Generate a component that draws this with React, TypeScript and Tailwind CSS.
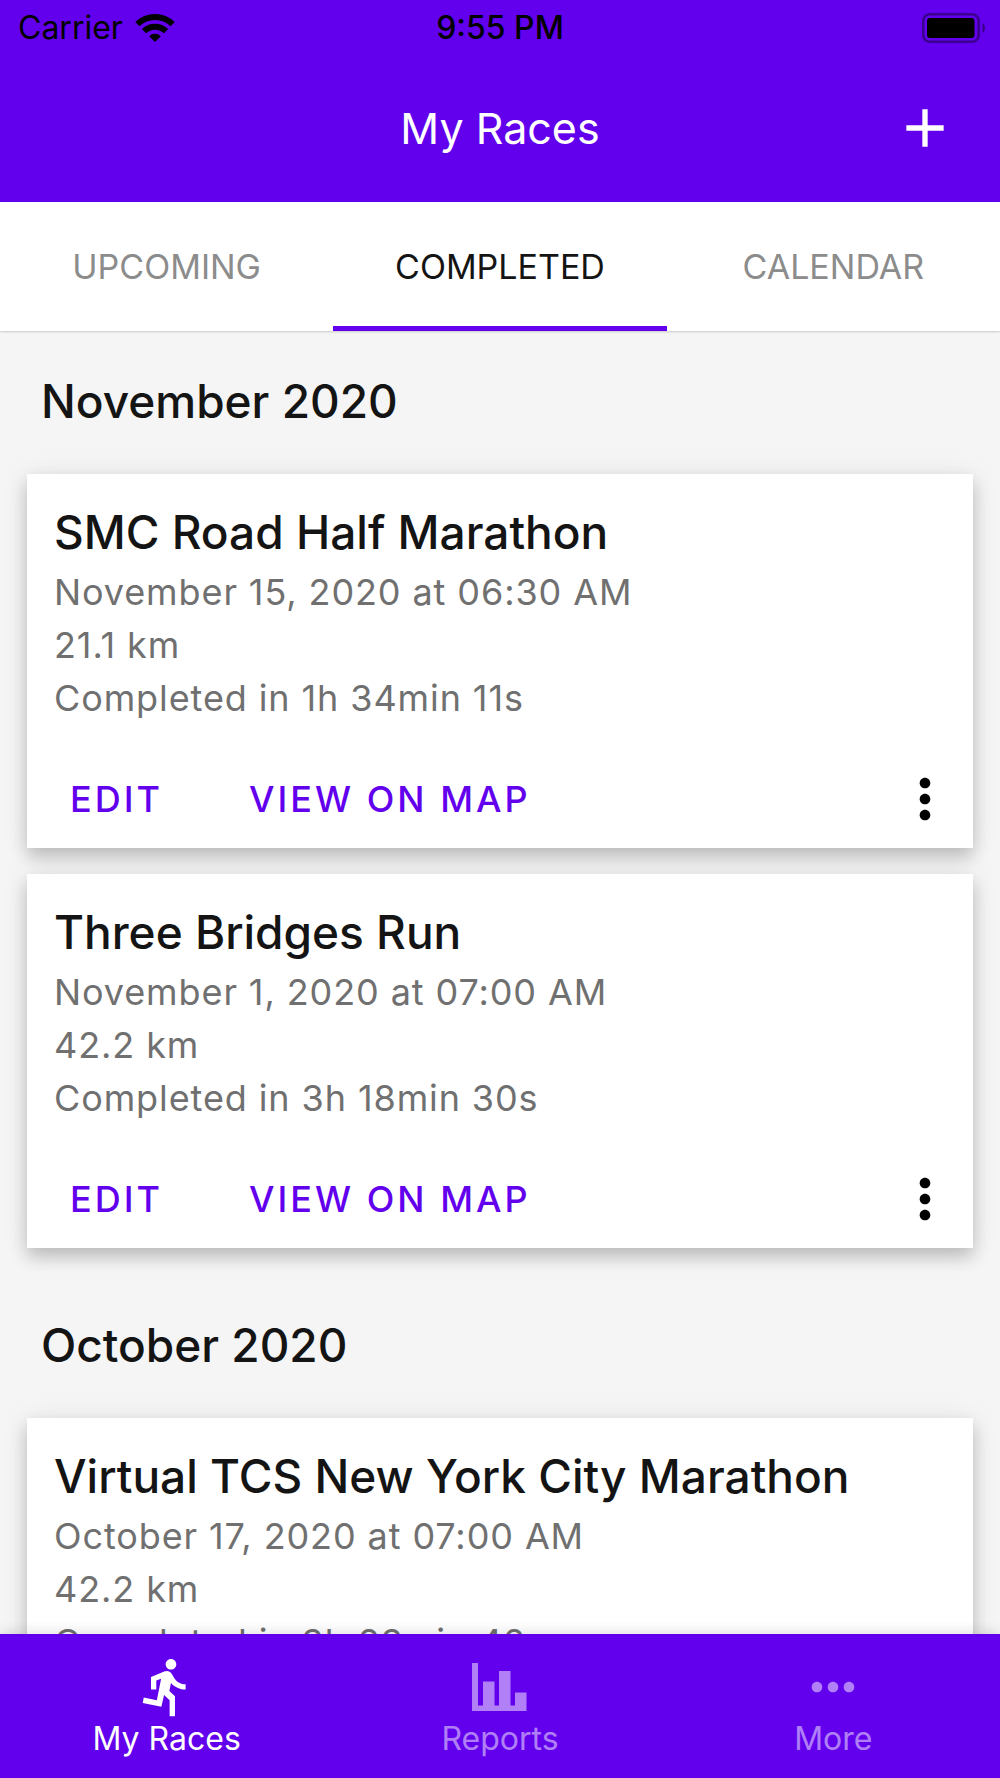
import type { ReactNode } from "react";

type Race = { name: string; date: string; distance: string; result: string };
type Month = { title: string; races: Race[] };

const months: Month[] = [
  {
    title: "November 2020",
    races: [
      {
        name: "SMC Road Half Marathon",
        date: "November 15, 2020 at 06:30 AM",
        distance: "21.1 km",
        result: "Completed in 1h 34min 11s",
      },
      {
        name: "Three Bridges Run",
        date: "November 1, 2020 at 07:00 AM",
        distance: "42.2 km",
        result: "Completed in 3h 18min 30s",
      },
    ],
  },
  {
    title: "October 2020",
    races: [
      {
        name: "Virtual TCS New York City Marathon",
        date: "October 17, 2020 at 07:00 AM",
        distance: "42.2 km",
        result: "Completed in 3h 23min 42s",
      },
    ],
  },
];

function Icon({ children }: { children: ReactNode }) {
  return (
    <svg viewBox="0 0 24 24" className="size-16 fill-current" aria-hidden="true">
      {children}
    </svg>
  );
}

function StatusBar() {
  return (
    <div className="grid h-[54px] grid-cols-3 items-center px-[18px] pt-px text-[32px] leading-10 text-black">
      <div className="flex items-center gap-3">
        <span>Carrier</span>
        <svg viewBox="0 0 40 29" className="h-[29px] w-10" aria-label="Wi-Fi">
          <g fill="none" stroke="#000" strokeWidth="6">
            <path d="M2.4 11.2a25 25 0 0 1 35.2 0" />
            <path d="M9 18.2a15.6 15.6 0 0 1 22 0" />
          </g>
          <path d="M20 29l-5.8-5.8a8.2 8.2 0 0 1 11.6 0z" />
        </svg>
      </div>
      <span className="text-center font-medium">9:55 PM</span>
      <svg viewBox="0 0 64 30" className="-mr-1 h-[30px] w-16 justify-self-end" aria-label="Battery full">
        <rect x="1.3" y="1.3" width="55.4" height="27.4" rx="6.5" fill="none" stroke="#000" strokeOpacity=".4" strokeWidth="2.6" />
        <rect x="5" y="5" width="47.5" height="20" rx="3" />
        <path d="M60.5 10v10c3.3-2 3.3-8 0-10z" fillOpacity=".45" />
      </svg>
    </div>
  );
}

function Header() {
  return (
    <header className="shrink-0 bg-[#6200ee]">
      <StatusBar />
      <div className="grid h-[148px] grid-cols-[1fr_auto_1fr] items-center px-[43px] text-white">
        <h1 className="col-start-2 text-[43px] leading-14">My Races</h1>
        <button type="button" aria-label="Add race" className="justify-self-end">
          <Icon>
            <path d="M19 13h-6v6h-2v-6H5v-2h6V5h2v6h6v2z" />
          </Icon>
        </button>
      </div>
    </header>
  );
}

function Tabs() {
  const base = "h-[129px] border-b-[5px] pt-[5px] text-[34px] uppercase";
  return (
    <div role="tablist" className="z-10 grid shrink-0 grid-cols-3 bg-white shadow-[0_1px_2px_rgba(0,0,0,0.18)]">
      <button type="button" role="tab" aria-selected="false" className={`${base} border-transparent text-[#8c8c8c]`}>
        Upcoming
      </button>
      <button type="button" role="tab" aria-selected="true" className={`${base} border-[#6200ee] text-[#141414]`}>
        Completed
      </button>
      <button type="button" role="tab" aria-selected="false" className={`${base} border-transparent text-[#8c8c8c]`}>
        Calendar
      </button>
    </div>
  );
}

function RaceCard({ race }: { race: Race }) {
  return (
    <article className="bg-white px-[27px] pt-[30px] shadow-[0_9px_16px_rgba(0,0,0,0.2),0_2px_26px_rgba(0,0,0,0.08)]">
      <h3 className="truncate text-[46px] leading-14 font-medium text-[#141414]">{race.name}</h3>
      <div className="mt-1.5 text-[36px] leading-[53px] tracking-wide text-[#707070]">
        <p>{race.date}</p>
        <p>{race.distance}</p>
        <p>{race.result}</p>
      </div>
      <div className="mt-6 flex h-[99px] items-center text-[36px] font-medium text-[#6200ee]">
        <button type="button" className="px-4 tracking-[3px]">EDIT</button>
        <button type="button" className="ml-[54px] px-4 tracking-[3px]">VIEW ON MAP</button>
        <button type="button" aria-label="More actions" className="-mr-[11px] ml-auto text-black">
          <Icon>
            <path d="M12 8c1.1 0 2-.9 2-2s-.9-2-2-2-2 .9-2 2 .9 2 2 2zm0 2c-1.1 0-2 .9-2 2s.9 2 2 2 2-.9 2-2-.9-2-2-2zm0 6c-1.1 0-2 .9-2 2s.9 2 2 2 2-.9 2-2-.9-2-2-2z" />
          </Icon>
        </button>
      </div>
    </article>
  );
}

function NavItem({ label, active, children }: { label: string; active?: boolean; children: ReactNode }) {
  return (
    <a
      href="#"
      aria-current={active ? "page" : undefined}
      className={`flex flex-col items-center pt-[21px] pb-[19px] ${active ? "text-white" : "text-white/50"}`}
    >
      {children}
      <span className="text-[32px] leading-10">{label}</span>
    </a>
  );
}

export default function App() {
  return (
    <div className="flex h-screen flex-col overflow-hidden bg-[#f5f5f5] font-['Inter',sans-serif]">
      <Header />
      <Tabs />
      <main className="min-h-0 flex-1 overflow-hidden px-[27px]">
        {months.map((month) => (
          <section key={month.title} className="mb-[27px]">
            <h2 className="px-3.5 pt-[38px] pb-[41px] text-[46px] leading-16 font-medium text-[#141414]">
              {month.title}
            </h2>
            <div className="flex flex-col gap-[26px]">
              {month.races.map((race) => (
                <RaceCard key={race.name} race={race} />
              ))}
            </div>
          </section>
        ))}
      </main>
      <nav className="z-10 grid shrink-0 grid-cols-3 bg-[#6200ee] shadow-[0_-2px_12px_rgba(0,0,0,0.12)]">
        <NavItem label="My Races" active>
          <Icon>
            <path d="M13.49 5.48c1.1 0 2-.9 2-2s-.9-2-2-2-2 .9-2 2 .9 2 2 2zm-3.6 13.9l1-4.4 2.1 2v6h2v-7.5l-2.1-2 .6-3c1.3 1.5 3.3 2.5 5.5 2.5v-2c-1.9 0-3.5-1-4.3-2.4l-1-1.6c-.4-.6-1-1-1.7-1-.3 0-.5.1-.8.1l-5.2 2.2v4.7h2v-3.4l1.8-.7-1.6 8.1-4.9-1-.4 2 7 1.4z" />
          </Icon>
        </NavItem>
        <NavItem label="Reports">
          <svg viewBox="0 0 64 64" className="size-16 fill-current" aria-hidden="true">
            <path d="M4 8h6v42.5h5V26.5h11.5v24h4.5V16h11.5v34.5h4.500V37.5h11.5V56H4z" />
          </svg>
        </NavItem>
        <NavItem label="More">
          <Icon>
            <path d="M6 10c-1.1 0-2 .9-2 2s.9 2 2 2 2-.9 2-2-.9-2-2-2zm12 0c-1.1 0-2 .9-2 2s.9 2 2 2 2-.9 2-2-.9-2-2-2zm-6 0c-1.1 0-2 .9-2 2s.9 2 2 2 2-.9 2-2-.9-2-2-2z" />
          </Icon>
        </NavItem>
      </nav>
    </div>
  );
}
